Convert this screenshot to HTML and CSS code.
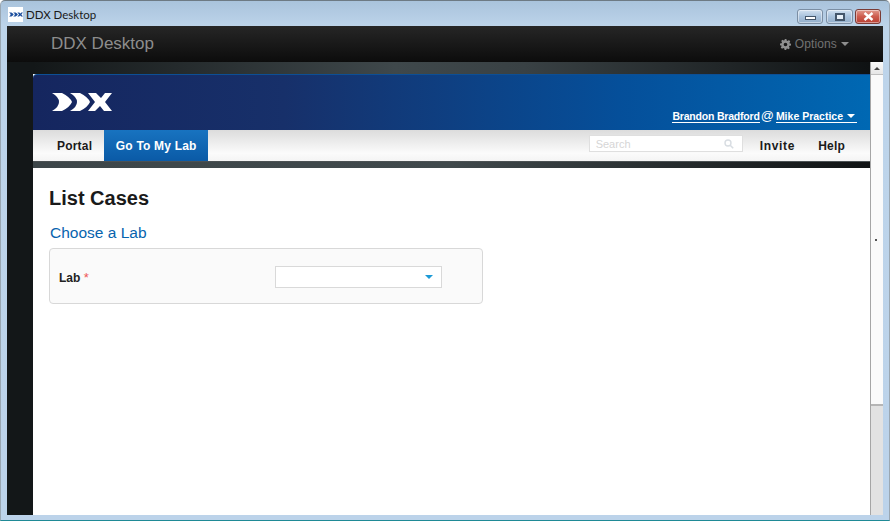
FILE: index.html
```html
<!DOCTYPE html>
<html lang="en">
<head>
<meta charset="utf-8">
<title>DDX Desktop</title>
<link rel="stylesheet" href="styles.css">
</head>
<body>
<div class="window">
  <header class="titlebar">
    <span class="app-icon">
      <svg width="14" height="7" viewBox="0 0 60 18"><path class="logo-shape" d="M0 0h10q8 4 10 9q-2 5-10 9H0q7-4 7-9T0 0ZM18 0h10q8 4 10 9q-2 5-10 9H18q7-4 7-9T18 0ZM36 0h8l5 5 4-5h7l-7 9 7 9h-8l-4-5-5 5h-7l7-9Z" fill="#1d4f9e"/></svg>
    </span>
    <span class="title-text">DDX Desktop</span>
    <div class="controls">
      <span class="ctl ctl-min"><i class="glyph-min"></i></span>
      <span class="ctl ctl-max"><i class="glyph-max"></i></span>
      <span class="ctl ctl-close">
        <svg width="11" height="9" viewBox="0 0 11 9"><path d="M1.5 1 9.5 8M9.5 1 1.5 8" stroke="#fff" stroke-width="2.4" fill="none"/></svg>
      </span>
    </div>
  </header>
  <div class="client">
    <div class="appbar">
      <span class="brand">DDX Desktop</span>
      <span class="options">
        <svg class="gear" width="11" height="11" viewBox="0 0 12 12"><path d="M5 0h2l.3 1.6 1.1.5L9.8 1.2l1.4 1.4-.9 1.4.5 1.1L12 5v2l-1.7.3-.5 1.1.9 1.4-1.4 1.4-1.4-.9-1.1.5L7 12H5l-.3-1.7-1.1-.5-1.4.9-1.4-1.4.9-1.4-.5-1.1L0 7V5l1.7-.3.5-1.1-.9-1.4 1.4-1.4 1.4.9 1.1-.5ZM6 4a2 2 0 1 0 0 4 2 2 0 0 0 0-4Z" fill="#8f8f8f" fill-rule="evenodd"/></svg>
        Options<i class="caret caret-grey"></i>
      </span>
    </div>
    <div class="viewport">
      <div class="page">
        <div class="sheet">
          <div class="banner">
            <svg class="logo" width="60" height="18" viewBox="0 0 60 18"><path d="M0 0h10q8 4 10 9q-2 5-10 9H0q7-4 7-9T0 0ZM18 0h10q8 4 10 9q-2 5-10 9H18q7-4 7-9T18 0ZM36 0h8l5 5 4-5h7l-7 9 7 9h-8l-4-5-5 5h-7l7-9Z" fill="#fff"/></svg>
            <div class="account">
              <a class="acct-link acct-first">Brandon Bradford</a>
              <span class="at">@</span>
              <a class="acct-link acct-last">Mike Practice <i class="caret caret-white"></i></a>
            </div>
          </div>
          <nav class="nav">
            <a class="nav-item">Portal</a>
            <a class="nav-item nav-active">Go To My Lab</a>
            <div class="search">
              <span>Search</span>
              <svg width="10" height="10" viewBox="0 0 10 10"><circle cx="4" cy="4" r="3" fill="none" stroke="#d8dde2" stroke-width="1.4"/><path d="M6.2 6.2 9.2 9.2" stroke="#d8dde2" stroke-width="1.6"/></svg>
            </div>
            <a class="nav-item nav-right">Invite</a>
            <a class="nav-item nav-right nav-help">Help</a>
          </nav>
          <div class="strip"></div>
          <main class="content">
            <h1>List Cases</h1>
            <h2>Choose a Lab</h2>
            <div class="panel">
              <label class="field-label">Lab <span class="req">*</span></label>
              <div class="select"><i class="caret caret-blue"></i></div>
            </div>
          </main>
        </div>
      </div>
      <div class="scrollbar">
        <div class="sb-btn"><i class="sb-up"></i></div>
        <div class="sb-thumb"><i class="sb-grip"></i></div>
      </div>
    </div>
  </div>
</div>
</body>
</html>
```
FILE: styles.css
```css
* { box-sizing: border-box; }
html, body { margin: 0; height: 100%; overflow: hidden; }
body { width: 890px; height: 521px; background: #fff; font-family: "Liberation Sans", Arial, sans-serif; }
a { text-decoration: none; color: inherit; }
i { display: block; }

.window {
  width: 890px; height: 521px; display: flex; flex-direction: column;
  background: linear-gradient(#a9c3dc 0, #bdd4ea 26px, #bcd3ea 100%);
  border: 1px solid #6d7a84; border-bottom-color: #1f8a96; border-radius: 5px 5px 0 0;
  border-left-color: #9aa7b2; border-right-color: #9aa7b2;
}
.titlebar { height: 25px; flex: none; display: flex; align-items: center; padding: 0 8px 0 7px; }
.app-icon { width: 15px; height: 15px; background: #fff; display: flex; align-items: center; justify-content: center; margin-top: 1px; }
.title-text { font: 11.5px Lato, sans-serif; color: #1a1a1a; margin-left: 3px; margin-top: 1px; }
.controls { margin-left: auto; display: flex; gap: 2px; align-self: flex-start; margin-top: 8px; }
.ctl { height: 15px; border: 1px solid #7b8ea3; border-radius: 3px; display: flex; align-items: center; justify-content: center; background: linear-gradient(#d2e1f0, #a9c2dc 50%, #93aeca); box-shadow: inset 0 0 0 1px rgba(255,255,255,.45); }
.ctl-min { width: 26px; margin-right: 1px; }
.ctl-max { width: 27px; }
.ctl-close { width: 26px; background: linear-gradient(#e19a8e, #cd5c4e 50%, #b83f33); border-color: #7a3b36; }
.glyph-min { width: 11px; height: 4px; background: #fff; border: 1px solid #44566a; margin-top: 3px; }
.glyph-max { width: 10px; height: 8px; background: #e8f0f8; border: 2px solid #44566a; }

.client { flex: 1; min-height: 0; margin: 0 6px 5px; display: flex; flex-direction: column; background: #131718; }
.appbar { height: 36px; flex: none; display: flex; align-items: center; justify-content: space-between; padding: 0 34px 0 44px; background: linear-gradient(#262626, #0c0c0c); }
.brand { font-size: 17px; color: #8d8d8d; }
.options { display: flex; align-items: center; gap: 4px; font-size: 12px; letter-spacing: .12px; color: #727272; }
.caret { width: 0; height: 0; border-left: 4px solid transparent; border-right: 4px solid transparent; border-top: 4px solid #8f8f8f; }

.viewport { flex: 1; min-height: 0; display: flex; }
.page { flex: 1; min-width: 0; padding: 12px 0 0 26px; background: linear-gradient(to right, #131718 0, #131718 3%, #3f484b 45%, #394144 60%, #0f1213 100%) top / 100% 12px no-repeat, #131718; }
.sheet { height: 100%; display: flex; flex-direction: column; background: #fff; }

.banner { height: 56px; flex: none; position: relative; display: flex; align-items: flex-end; justify-content: flex-end; padding: 0 13px 8px 19px; background: linear-gradient(to right, #15265f 0, #17306a 30%, #054f9a 70%, #0068b3 100%); border-radius: 4px 0 0 0; border-top: 1px solid #0d4f95; }
.logo { position: absolute; left: 19px; top: 18px; }
.account { display: flex; align-items: baseline; font-size: 10.5px; font-weight: bold; color: #fff; transform: translateY(1px); }
.acct-link { border-bottom: 1px solid #fff; line-height: 12px; }
.acct-first { letter-spacing: -.2px; }
.at { font-weight: normal; margin: 0 2px 0 1px; font-size: 13px; }
.acct-last { display: inline-flex; align-items: center; }
.caret-white { border-top-color: #fff; margin-left: 4px; margin-right: 2px; }

.nav { height: 31px; flex: none; display: flex; align-items: stretch; background: linear-gradient(#dcdcdc, #fbfbfb 75%, #f4f4f4); font-size: 12px; font-weight: bold; color: #1a1a1a; letter-spacing: .2px; }
.nav-item { display: flex; align-items: center; padding: 0 12px; }
.nav-item:first-child { padding: 0 12px 0 24px; }
.nav-active { width: 104px; padding: 0; justify-content: center; color: #fff; background: linear-gradient(#1873c0, #0a5aa6); }
.search { margin-left: auto; margin-right: 6px; align-self: flex-start; margin-top: 5px; width: 154px; height: 17px; display: flex; align-items: center; justify-content: space-between; padding: 0 8px 0 6px; background: #fff; border: 1px solid #dfdfdf; font-size: 11px; font-weight: normal; letter-spacing: 0; color: #d6d6d6; }
.nav-right { padding: 0 11px; letter-spacing: .7px; }
.nav-help { margin-right: 14px; padding-left: 12px; letter-spacing: .2px; }

.strip { height: 7px; flex: none; background: linear-gradient(to right, #3d4649 0, #40494c 50%, #101314 100%); border-top: 1px solid #4b5153; }

.content { flex: 1; padding: 19px 16px; min-height: 0; }
h1 { margin: 0; font-size: 20px; line-height: 22px; font-weight: bold; color: #1a1a1a; }
h2 { margin: 15px 0 0 1px; font-size: 15.5px; line-height: 18px; font-weight: normal; color: #0764ae; }
.panel { margin-top: 6px; width: 434px; height: 56px; display: flex; align-items: center; padding: 2px 40px 0 9px; background: #fafafa; border: 1px solid #d8d8d8; border-radius: 4px; }
.field-label { font-size: 12px; font-weight: bold; color: #222; width: 217px; }
.req { color: #e55; font-weight: normal; font-size: 13px; }
.select { width: 167px; height: 22px; display: flex; align-items: center; justify-content: flex-end; padding-right: 8px; background: #fff; border: 1px solid #d9d9d9; }
.caret-blue { border-top-color: #1c9ad6; }

.scrollbar { width: 13px; flex: none; display: flex; flex-direction: column; background: #e2e2e2; border-left: 1px solid #a5a5a5; }
.sb-btn { height: 13px; flex: none; display: flex; align-items: center; justify-content: center; background: linear-gradient(#fafafa, #e6e6e6); border-bottom: 1px solid #c0c0c0; }
.sb-up { width: 0; height: 0; border-left: 3px solid transparent; border-right: 3px solid transparent; border-bottom: 3px solid #444; }
.sb-thumb { height: 331px; flex: none; display: flex; align-items: center; justify-content: center; padding-right: 3px; background: #fafafa; border-bottom: 2px solid #b5b5b5; }
.sb-grip { width: 2px; height: 2px; background: #555; }
```
